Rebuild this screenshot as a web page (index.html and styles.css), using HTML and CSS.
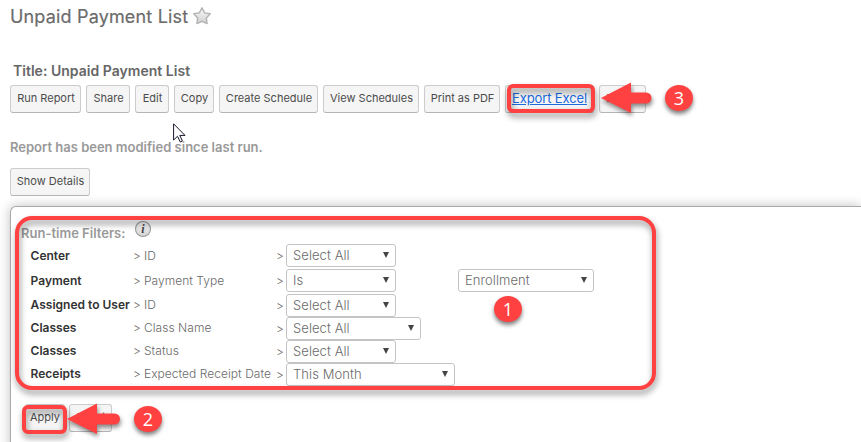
FILE: index.html
```html
<!DOCTYPE html>
<html lang="en">
<head>
<meta charset="utf-8">
<title>Unpaid Payment List</title>
<link rel="stylesheet" href="styles.css">
</head>
<body>
<main class="page">
  <header class="heading">
    <h1>Unpaid Payment List</h1>
    <svg class="star" viewBox="0 0 18 18">
      <defs><linearGradient id="sg" x1="0" y1="0" x2="0" y2="1"><stop offset="0" stop-color="#fafafa"/><stop offset="1" stop-color="#cfcfcf"/></linearGradient></defs>
      <path d="M9 1.6 L11.4 6.2 L16.4 7 L12.9 10.7 L13.6 15.8 L9 13.7 L4.4 15.8 L5.1 10.7 L1.6 7 L6.6 6.2 Z" fill="url(#sg)" stroke="#b4b4b4" stroke-width="1.3" stroke-linejoin="round"/>
    </svg>
  </header>
  <h2>Title: Unpaid Payment List</h2>
  <div class="toolbar">
    <button class="btn w-run">Run Report</button>
    <button class="btn w-share">Share</button>
    <button class="btn w-edit">Edit</button>
    <button class="btn w-copy">Copy</button>
    <button class="btn w-create">Create Schedule</button>
    <button class="btn w-view">View Schedules</button>
    <button class="btn w-print">Print as PDF</button>
    <button class="btn w-export"><span class="link">Export Excel</span></button>
    <button class="btn w-delete">Delete</button>
  </div>
  <p class="notice">Report has been modified since last run.</p>
  <button class="btn w-details">Show Details</button>
  <section class="panel">
    <div class="filters-title">
      <span>Run-time Filters:</span>
      <svg class="info" viewBox="0 0 18 18">
        <defs><linearGradient id="ig" x1="0" y1="0" x2="0" y2="1"><stop offset="0" stop-color="#fafafa"/><stop offset="1" stop-color="#d2d2d2"/></linearGradient></defs>
        <circle cx="9" cy="9" r="7.5" fill="url(#ig)" stroke="#999" stroke-width="1.1"/>
        <text x="9" y="13.2" text-anchor="middle" class="info-i">i</text>
      </svg>
    </div>
    <div class="row tall"><b>Center</b><span class="gt">&gt;</span><span class="field">ID</span><span class="gt2">&gt;</span><div class="select">Select All<i></i></div></div>
    <div class="row tall"><b>Payment</b><span class="gt">&gt;</span><span class="field">Payment Type</span><span class="gt2">&gt;</span><div class="select">Is<i></i></div><div class="select value">Enrollment<i></i></div></div>
    <div class="row third"><b>Assigned to User</b><span class="gt">&gt;</span><span class="field">ID</span><span class="gt2">&gt;</span><div class="select">Select All<i></i></div></div>
    <div class="row"><b>Classes</b><span class="gt">&gt;</span><span class="field">Class Name</span><span class="gt2">&gt;</span><div class="select mid">Select All<i></i></div></div>
    <div class="row"><b>Classes</b><span class="gt">&gt;</span><span class="field">Status</span><span class="gt2">&gt;</span><div class="select">Select All<i></i></div></div>
    <div class="row"><b>Receipts</b><span class="gt">&gt;</span><span class="field date">Expected Receipt Date</span><span class="gt2">&gt;</span><div class="select wide">This Month<i></i></div></div>
    <div class="actions">
      <button class="btn w-apply">Apply</button>
      <button class="btn w-reset">Reset</button>
    </div>
  </section>
</main>

<div class="frame frame-filters"></div>
<div class="frame frame-export"></div>
<div class="frame frame-apply"></div>
<svg class="arrow arrow-3" viewBox="0 0 52 32"><path d="M0 16 L30 .5 V10.5 H45 A5.5 5.5 0 0 1 45 21.5 H30 V31 Z"/></svg>
<svg class="arrow arrow-2" viewBox="0 0 54 32"><path d="M0 16 L30 .5 V10.5 H47.5 A5.5 5.5 0 0 1 47.5 21.5 H30 V31 Z"/></svg>
<div class="step step-1">1</div>
<div class="step step-2">2</div>
<div class="step step-3">3</div>
<svg class="cursor" viewBox="0 0 13 20"><path d="M.6 .8 V17 L4.5 13.3 L7.3 19 L9.4 18 L6.8 12.4 H12 Z" fill="#fff" stroke="#15152a" stroke-width="1"/></svg>
</body>
</html>
```

FILE: styles.css
```css
* { box-sizing: border-box; }
body { margin: 0; width: 861px; height: 442px; overflow: hidden; position: relative; background: #fff; font-family: Inter, "Liberation Sans", sans-serif; color: #444; white-space: nowrap; }
.page { padding-left: 10px; }
.heading { display: flex; height: 33px; align-items: center; }
h1 { margin: 0; width: 182px; font-size: 18px; font-weight: 400; line-height: 33px; color: #6c6c6c; letter-spacing: .17px; -webkit-text-stroke: .2px #6c6c6c; }
.star { width: 20px; height: 20px; margin-top: -2px; }
h2 { margin: 28px 0 4px 3px; font-size: 14px; font-weight: 600; line-height: 20px; color: #666; letter-spacing: .02px; }
.toolbar { display: flex; gap: 5px; }
.btn { display: block; height: 28px; padding: 0 0 1px 1px; border: 1px solid #ccc; border-bottom-color: #b5b5b5; border-radius: 3px; background: #f5f5f5; color: #4c4c4c; font: 400 11px/25px Inter, "Liberation Sans", sans-serif; text-align: center; white-space: nowrap; flex: none; }
.w-run { width: 71px; }
.w-share { width: 44px; }
.w-edit { width: 34px; }
.w-copy { width: 40px; }
.w-create { width: 99px; }
.w-view { width: 96px; }
.w-print { width: 76px; }
.w-export { width: 89px; padding-left: 0; }
.w-delete { width: 47px; }
.w-details { width: 80px; }
.w-apply { width: 40px; padding-left: 0; }
.w-reset { width: 43px; }
.link { font-size: 13px; letter-spacing: -.13px; color: #1a6be0; text-decoration: underline; }
.notice { margin: 24px 0 11px; height: 20px; font-size: 13px; font-weight: 600; line-height: 20px; color: #999; }
.panel { height: 250px; margin-top: 10px; border: 1px solid #aaa; border-radius: 6px 0 0 6px; border-right: 0; padding-left: 10px; box-shadow: 0 0 12px rgba(0, 0, 0, .25); background: #fff; }
.filters-title { display: flex; height: 36px; padding-top: 13px; font-size: 13px; font-weight: 600; line-height: 27px; color: #999; }
.filters-title span { width: 113px; }
.info { width: 18px; height: 18px; }
.info-i { font: italic bold 12px "Liberation Serif", serif; fill: #444; }
.row { display: flex; height: 23px; align-items: center; padding-left: 9.6px; font-size: 12px; font-weight: 300; color: #6a6a6a; }
.row > b, .row > span { padding-bottom: 2px; }
.tall { height: 25px; }
.tall > b, .tall > .gt, .tall > .field { padding-bottom: 1px; }
.third { height: 24px; padding-top: 1px; }
.row b { width: 102.4px; font-weight: 600; color: #333; }
.gt { width: 11px; }
.field { width: 132px; letter-spacing: .04px; }
.gt2 { width: 10px; }
.row > .gt2 { padding-bottom: 0; }
.select { display: flex; justify-content: space-between; align-items: center; width: 110px; height: 23px; border: 1px solid #c4c4c4; border-radius: 3px; background: #fff; padding: 0 6px 1px; font-size: 13px; letter-spacing: .08px; color: #6a6a6a; flex: none; }
.select i { width: 0; border: 3px solid transparent; border-top: 6px solid #444; border-bottom: 0; margin-top: 0; }
.mid { width: 135px; }
.wide { width: 169px; }
.value { width: 136px; margin-left: 62px; }
.actions { display: flex; gap: 4px; padding: 18px 0 0 4px; }
.frame { position: absolute; border: 4px solid #ff4141; border-radius: 6px; filter: drop-shadow(1px 4px 3px rgba(0, 0, 0, .45)); }
.frame-filters { left: 15px; top: 216px; width: 641px; height: 174px; border-radius: 17px; }
.frame-export { left: 507px; top: 84px; width: 88px; height: 29px; }
.frame-apply { left: 22px; top: 405px; width: 45px; height: 29px; }
.arrow { position: absolute; height: 32px; overflow: visible; fill: #ff4141; filter: drop-shadow(1px 3px 2px rgba(0, 0, 0, .45)); }
.arrow-3 { left: 601px; top: 82px; width: 52px; }
.arrow-2 { left: 67px; top: 403px; width: 54px; }
.step { position: absolute; width: 28px; height: 26px; border-radius: 50%; background: #ff4141; color: #fff; text-align: center; font: 18px/26px "Open Sans", sans-serif; box-shadow: 0 3px 4px rgba(0, 0, 0, .5); }
.step-1 { left: 494px; top: 296px; }
.step-2 { left: 134px; top: 406px; }
.step-3 { left: 665px; top: 85px; }
.cursor { position: absolute; left: 173px; top: 123px; width: 13px; height: 20px; }
```
